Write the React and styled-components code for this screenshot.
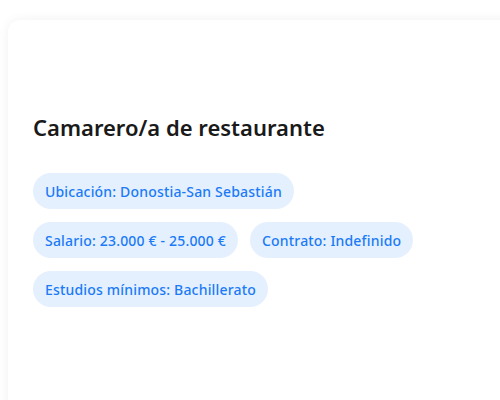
import React from "react";
import styled, { createGlobalStyle } from "styled-components";

const Global = createGlobalStyle`
  html, body { margin: 0; padding: 0; background: #ffffff; }
  body { padding: 20px 0 0 8px; font-family: "Noto Sans", "Open Sans", sans-serif; overflow: hidden; width: 500px; height: 400px; box-sizing: border-box; }
`;

const Card = styled.div`
  background: #fff;
  border-radius: 12px;
  box-shadow: 0 0 12px rgba(0, 0, 0, 0.06);
  width: 520px;
  height: 420px;
  padding: 92px 25px 24px;
  box-sizing: border-box;
`;

const Title = styled.h2`
  margin: 0 0 31px;
  font-size: 22px;
  font-weight: 600;
  color: #1a1a1a;
  line-height: 30px;
`;

const Tags = styled.div`
  display: flex;
  flex-direction: column;
  gap: 13px;
`;

const Row = styled.div`
  display: flex;
  gap: 12px;
`;

const Tag = styled.span`
  display: inline-flex;
  align-items: center;
  height: 36px;
  padding: 0 12px;
  border-radius: 18px;
  background: #e5f0fe;
  color: #1a7af8;
  font-size: 14px;
  font-weight: 500;
  letter-spacing: 0.18px;
  white-space: nowrap;
`;

const rows = [
  ["Ubicación: Donostia-San Sebastián"],
  ["Salario: 23.000 € - 25.000 €", "Contrato: Indefinido"],
  ["Estudios mínimos: Bachillerato"],
];

export default function App() {
  return (
    <>
      <Global />
      <Card>
        <Title>Camarero/a de restaurante</Title>
        <Tags>
          {rows.map((r, i) => (
            <Row key={i}>
              {r.map((t) => (
                <Tag key={t}>{t}</Tag>
              ))}
            </Row>
          ))}
        </Tags>
      </Card>
    </>
  );
}
